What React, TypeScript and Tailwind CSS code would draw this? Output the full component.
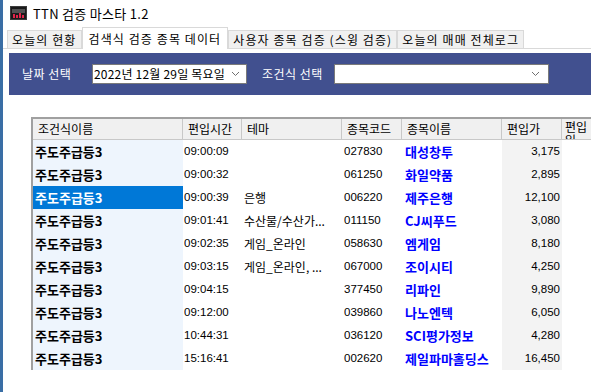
import React from "react";

const KR = "font-['Noto_Sans_CJK_KR',sans-serif]";
const NUM = "font-['Liberation_Sans','Noto_Sans_CJK_KR',sans-serif]";

type Row = { time: string; theme: string; code: string; name: string; price: string };

const rows: Row[] = [
  { time: "09:00:09", theme: "", code: "027830", name: "대성창투", price: "3,175" },
  { time: "09:00:32", theme: "", code: "061250", name: "화일약품", price: "2,895" },
  { time: "09:00:39", theme: "은행", code: "006220", name: "제주은행", price: "12,100" },
  { time: "09:01:41", theme: "수산물/수산가...", code: "011150", name: "CJ씨푸드", price: "3,080" },
  { time: "09:02:35", theme: "게임_온라인", code: "058630", name: "엠게임", price: "8,180" },
  { time: "09:03:15", theme: "게임_온라인, ...", code: "067000", name: "조이시티", price: "4,250" },
  { time: "09:04:15", theme: "", code: "377450", name: "리파인", price: "9,890" },
  { time: "09:12:00", theme: "", code: "039860", name: "나노엔텍", price: "6,050" },
  { time: "10:44:31", theme: "", code: "036120", name: "SCI평가정보", price: "4,280" },
  { time: "15:16:41", theme: "", code: "002620", name: "제일파마홀딩스", price: "16,450" },
];

const tabs = ["오늘의 현황", "검색식 검증 종목 데이터", "사용자 종목 검증 (스윙 검증)", "오늘의 매매 전체로그"];

function Chevron() {
  return (
    <svg width="9" height="6" viewBox="0 0 9 6" className="shrink-0">
      <path d="M1 1 L4.5 4.5 L8 1" fill="none" stroke="#707070" strokeWidth="1" />
    </svg>
  );
}

function AppIcon() {
  return (
    <svg width="17" height="14" viewBox="0 0 17 14">
      <rect x="0" y="0" width="17" height="14" fill="#3c3c3c" />
      <rect x="1" y="1" width="15" height="12" fill="#1a1a1a" />
      <path d="M2 4 H15 M2 6 H15" stroke="#8a8a8a" strokeWidth="1" />
      <rect x="3" y="8" width="2" height="4" fill="#e0264a" />
      <rect x="6" y="9" width="2" height="3" fill="#e0264a" />
      <rect x="9" y="7" width="2" height="5" fill="#e0264a" />
      <rect x="12" y="9" width="2" height="3" fill="#e0264a" />
    </svg>
  );
}

const cols = "grid-cols-[150px_59px_100px_60px_100px_60px_40px]";

export default function App() {
  return (
    <div className={`w-[591px] h-[392px] overflow-hidden bg-white flex ${KR}`}>
      <div className="w-[3px] shrink-0 bg-[#3a6ea5]" />
      <div className="flex-1 flex flex-col min-w-0">
        {/* title bar */}
        <div className="h-[26px] flex items-center gap-[6px] pl-[7px] bg-white">
          <AppIcon />
          <span className="text-[13px] text-black leading-none tracking-[0.3px]">TTN 검증 마스타 1.2</span>
        </div>

        {/* tabs */}
        <div className="h-[23px] flex items-end pl-[4px] border-b border-[#d9d9d9] whitespace-nowrap">
          {tabs.map((t, i) =>
            i === 1 ? (
              <div
                key={t}
                className="h-[22px] px-[6px] flex items-center bg-white border border-b-0 border-[#d9d9d9] text-[12px] tracking-[1.1px] text-black -mb-px"
              >
                {t}
              </div>
            ) : (
              <div
                key={t}
                className="h-[18px] px-[4px] flex items-center bg-[#f0f0f0] border border-b-0 border-[#d9d9d9] text-[12px] tracking-[1.1px] text-black"
              >
                {t}
              </div>
            )
          )}
        </div>

        {/* filter panel */}
        <div className="mt-[4px] ml-[6px] h-[42px] bg-[#41508f] flex items-center text-white text-[12px]">
          <span className="ml-[13px] w-[70px] tracking-[0.5px]">날짜 선택</span>
          <div className="w-[155px] h-[20px] bg-white border border-[#7a7a7a] flex items-center justify-between pl-[1px] pr-[6px] text-black text-[12px]">
            <span className="tracking-[0.2px]">2022년 12월 29일 목요일</span>
            <Chevron />
          </div>
          <span className="ml-[15px] w-[72px] tracking-[0.5px]">조건식 선택</span>
          <div className="w-[215px] h-[20px] bg-white border border-[#7a7a7a] flex items-center justify-end pr-[8px]">
            <Chevron />
          </div>
        </div>

        {/* table */}
        <div className="mt-[22px] ml-[28px]">
          <div className={`grid ${cols} w-max border-t-2 border-l-2 border-[#a0a0a0] bg-white`}>
            {["조건식이름", "편입시간", "테마", "종목코드", "종목이름", "편입가", "편입일"].map((h, i) => (
              <div
                key={h}
                className={`h-[21px] bg-[#f0f0f0] border-r border-b border-[#c8c8c8] flex text-[12px] text-black overflow-hidden ${
                  i === 6 ? "items-start pl-[3px] pt-[1px]" : "items-center pl-[5px]"
                }`}
              >
                {i === 6 ? <span className="w-[25px] break-all leading-[13px]">편입일</span> : h}
              </div>
            ))}
            {rows.map((r, idx) => {
              const sel = idx === 2;
              return (
                <React.Fragment key={r.code}>
                  <div
                    className={`h-[23px] flex items-center pl-[2px] text-[13px] font-bold ${
                      sel ? "bg-[#0078d7] text-white" : "bg-[#eef5fd] text-black"
                    }`}
                  >
                    주도주급등3
                  </div>
                  <div className={`h-[23px] flex items-center pl-[1px] text-[11.5px] text-black ${NUM}`}>{r.time}</div>
                  <div className="h-[23px] flex items-center pl-[2px] text-[12px] text-black whitespace-nowrap overflow-hidden">
                    {r.theme}
                  </div>
                  <div className={`h-[23px] flex items-center pl-[2px] text-[11.5px] text-black ${NUM}`}>{r.code}</div>
                  <div className="h-[23px] flex items-center pl-[3px] text-[13px] font-bold text-[#0000ff] whitespace-nowrap">
                    {r.name}
                  </div>
                  <div className={`h-[23px] flex items-center justify-end pr-[2px] bg-[#f3f3f3] text-[11.5px] text-black ${NUM}`}>
                    {r.price}
                  </div>
                  <div className="h-[23px]" />
                </React.Fragment>
              );
            })}
          </div>
        </div>
      </div>
    </div>
  );
}
